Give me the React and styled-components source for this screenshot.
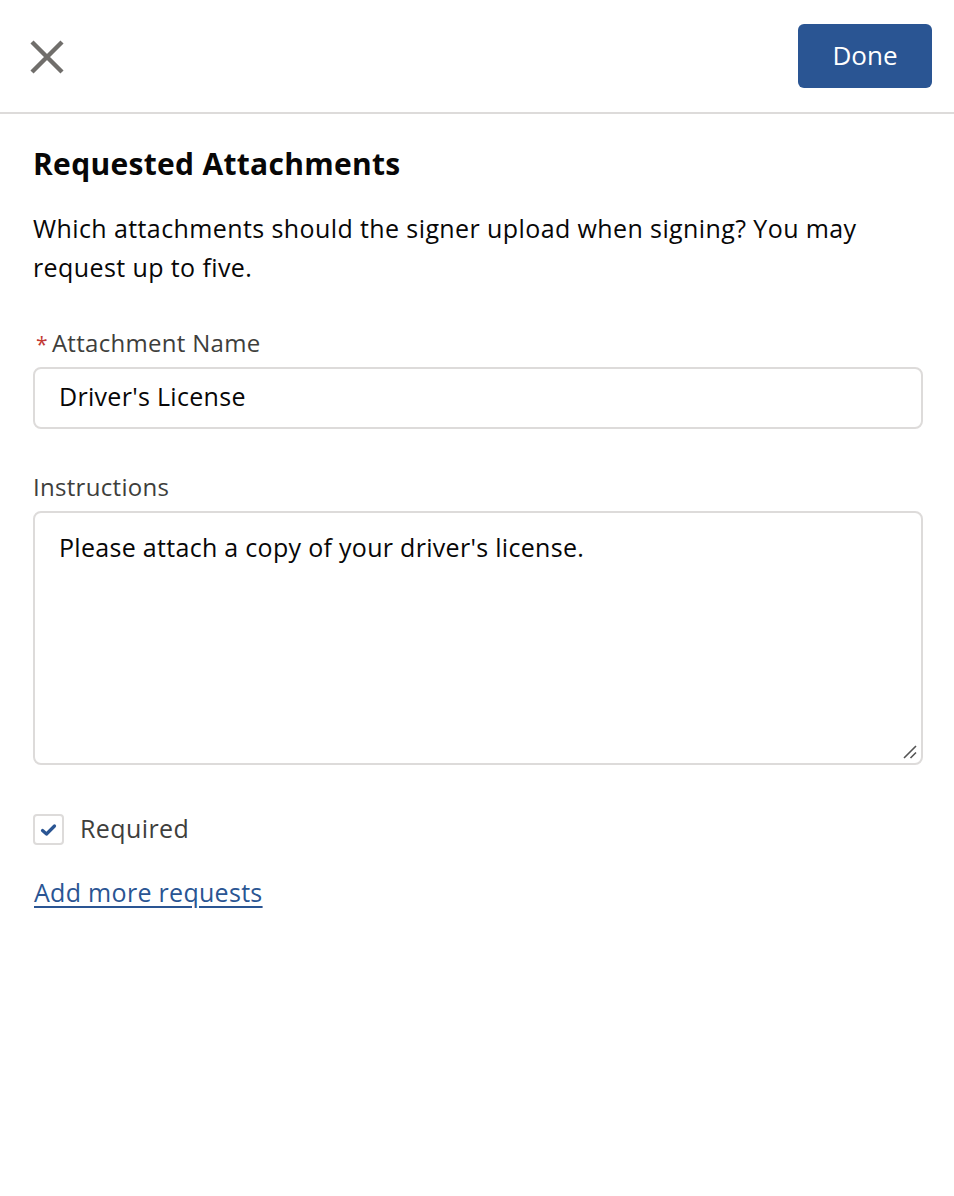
import React from "react";
import styled, { createGlobalStyle } from "styled-components";

const Global = createGlobalStyle`
  html, body { margin: 0; padding: 0; background: #fff; }
  body { font-family: "Open Sans", Lato, "Liberation Sans", sans-serif; color: #080707; }
  * { box-sizing: border-box; }
`;

const Page = styled.div`
  width: 954px;
  min-height: 1196px;
  background: #fff;
`;

const Header = styled.header`
  height: 114px;
  display: flex;
  align-items: center;
  justify-content: space-between;
  padding: 0 22px 0 30px;
  border-bottom: 2px solid #dddbda;
`;

const CloseButton = styled.button`
  width: 34px;
  height: 34px;
  padding: 0;
  border: none;
  background: none;
  display: flex;
  align-items: center;
  justify-content: center;
  margin-top: 1px;
`;

const DoneButton = styled.button`
  width: 134px;
  height: 64px;
  border: none;
  border-radius: 6px;
  background: #2a5593;
  color: #fff;
  font-family: inherit;
  font-size: 26px;
  padding: 0 0 2px;
`;

const Body = styled.main`
  padding: 32px 31px 0 33px;
  display: flex;
  flex-direction: column;
`;

const Title = styled.h1`
  margin: 0;
  font-size: 30px;
  font-weight: 700;
  line-height: 36px;
  letter-spacing: 0.3px;
  color: #080707;
`;

const Intro = styled.p`
  margin: 27px 0 0;
  font-size: 25px;
  line-height: 39px;
  letter-spacing: 0.4px;
  color: #080707;
`;

const Field = styled.div`
  display: flex;
  flex-direction: column;
  margin-top: ${(p) => p.$mt || 0}px;
`;

const Label = styled.label`
  display: block;
  height: 28px;
  font-size: 24px;
  line-height: 28px;
  letter-spacing: 0.3px;
  color: #3e3e3c;
  margin-bottom: 10px;
`;

const Star = styled.span`
  color: #c23934;
  font-size: 21px;
  line-height: 1;
  margin: 0 4px 0 3px;
`;

const Input = styled.div`
  height: 62px;
  border: 2px solid #dddbda;
  border-radius: 8px;
  padding: 0 24px 4px;
  display: flex;
  align-items: center;
  font-size: 25px;
  letter-spacing: 0.3px;
  color: #080707;
`;

const TextArea = styled.div`
  position: relative;
  height: 254px;
  border: 2px solid #dddbda;
  border-radius: 8px;
  padding: 19px 24px;
  font-size: 25px;
  line-height: 30px;
  letter-spacing: 0.3px;
  color: #080707;
`;

const Grip = styled.svg`
  position: absolute;
  right: 2px;
  bottom: 2px;
`;

const CheckRow = styled.div`
  display: flex;
  align-items: center;
  gap: 16px;
  height: 31px;
  margin-top: 49px;
`;

const Box = styled.span`
  width: 31px;
  height: 31px;
  border: 2px solid #dddbda;
  border-radius: 4px;
  display: flex;
  align-items: center;
  justify-content: center;
`;

const CheckLabel = styled.span`
  font-size: 25px;
  letter-spacing: 0.4px;
  line-height: 31px;
  color: #3e3e3c;
  margin-top: -2px;
`;

const Link = styled.a`
  margin-top: 30px;
  font-size: 25px;
  line-height: 34px;
  letter-spacing: 0.3px;
  color: #2a5593;
  text-decoration: underline;
  text-decoration-thickness: 2px;
  text-underline-offset: 4px;
  align-self: flex-start;
  padding-left: 1px;
`;

export default function App() {
  return (
    <Page>
      <Global />
      <Header>
        <CloseButton aria-label="Close">
          <svg width="34" height="34" viewBox="0 0 34 34">
            <path d="M2 2 L32 32 M32 2 L2 32" stroke="#706e6b" strokeWidth="4.4" strokeLinecap="butt" />
          </svg>
        </CloseButton>
        <DoneButton>Done</DoneButton>
      </Header>
      <Body>
        <Title>Requested Attachments</Title>
        <Intro>
          Which attachments should the signer upload when signing? You may request up to five.
        </Intro>
        <Field $mt={42}>
          <Label>
            <Star>*</Star>Attachment Name
          </Label>
          <Input>Driver's License</Input>
        </Field>
        <Field $mt={44}>
          <Label>Instructions</Label>
          <TextArea>
            Please attach a copy of your driver's license.
            <Grip width="18" height="18" viewBox="0 0 18 18">
              <path d="M3 15 L15 3 M9.5 15 L15 9.5" stroke="#555" strokeWidth="1.6" />
            </Grip>
          </TextArea>
        </Field>
        <CheckRow>
          <Box>
            <svg width="17" height="14" viewBox="0 0 17 14">
              <path d="M2.5 7.5 L6.5 11 L14.5 3" stroke="#2a5593" strokeWidth="3.2" fill="none" strokeLinecap="round" strokeLinejoin="round" />
            </svg>
          </Box>
          <CheckLabel>Required</CheckLabel>
        </CheckRow>
        <Link href="#">Add more requests</Link>
      </Body>
    </Page>
  );
}
